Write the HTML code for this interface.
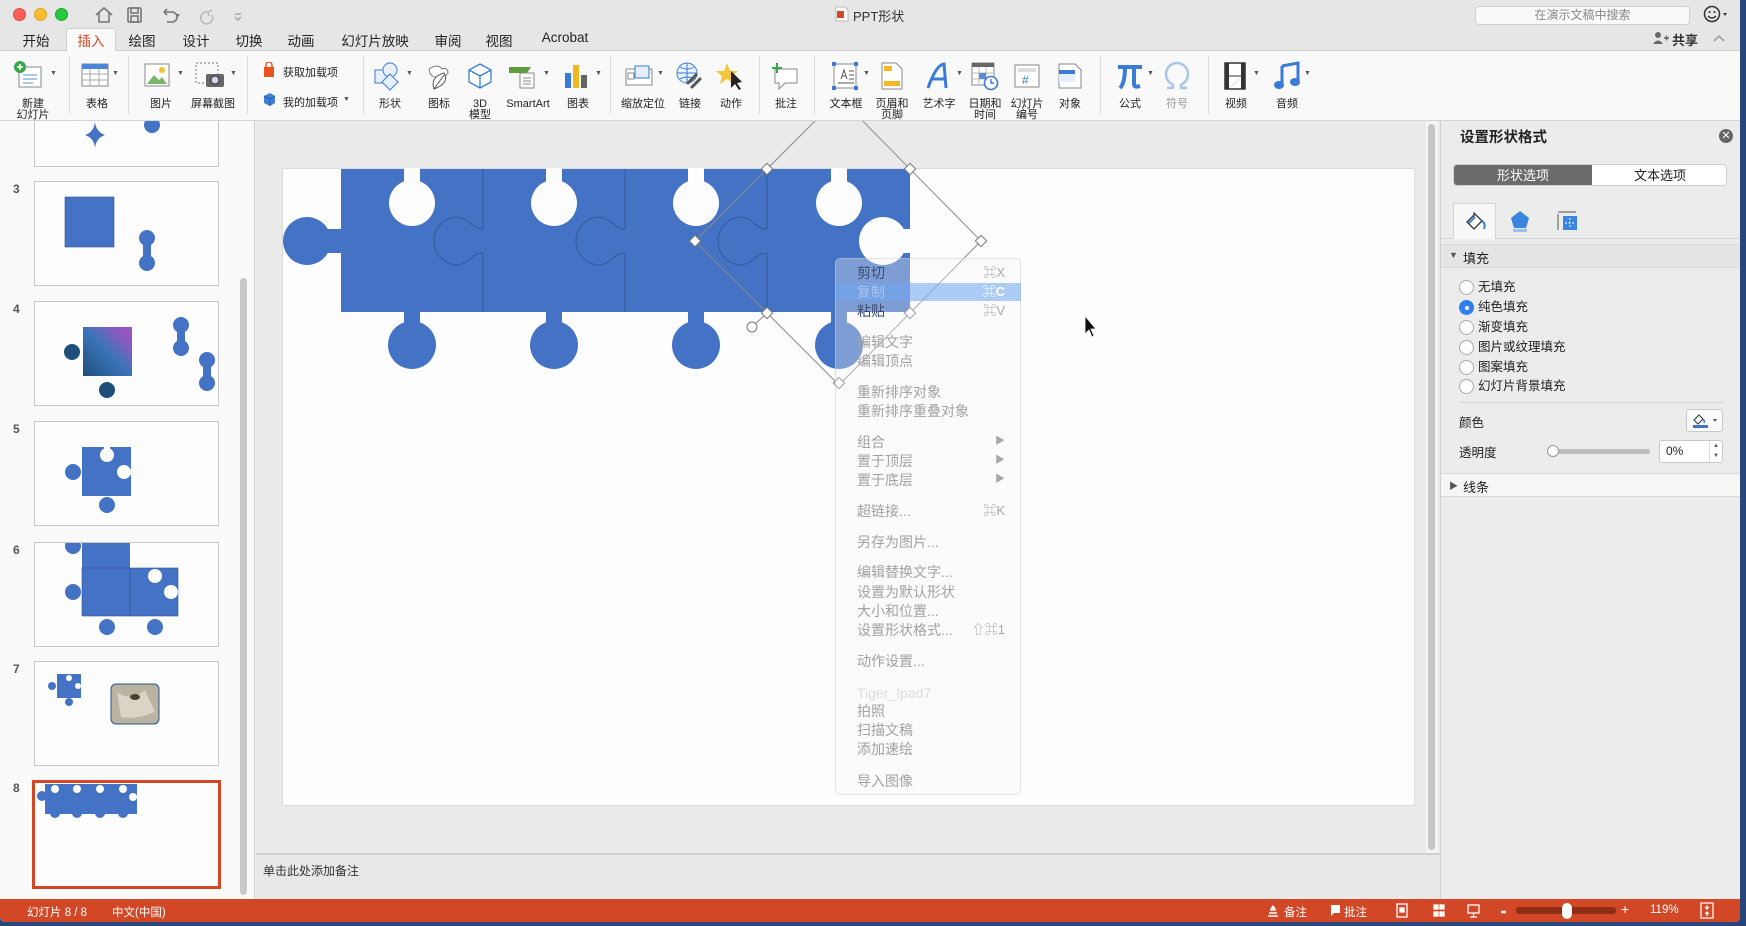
<!DOCTYPE html>
<html><head><meta charset="utf-8"><style>
*{margin:0;padding:0;box-sizing:border-box}
body{width:1746px;height:926px;background:#27467a;position:relative;overflow:hidden;font-family:"Liberation Sans","Noto Sans CJK SC",sans-serif;color:#222}
.a{position:absolute}
.win{left:0;top:0;width:1740px;height:922px;background:#f0f0f0;overflow:hidden;border-radius:0 0 5px 5px}
.tab{position:absolute;top:30px;font-size:13.5px;transform:translateX(-50%);color:#222}
.lbl{position:absolute;font-size:11px;text-align:center;transform:translateX(-50%);line-height:11px;color:#222;white-space:nowrap}
.sep{position:absolute;top:56px;width:1px;height:58px;background:#dcdcdc}
.ic{position:absolute;top:61px;transform:translateX(-50%)}
.dd{position:absolute;font-size:7px;color:#555}
.num{position:absolute;left:13px;font-size:12px;font-weight:bold;color:#555}
.th{position:absolute;left:34px;width:185px;height:105px;background:#fdfdfd;border:1px solid #c8c8c8;overflow:hidden}
.mi{position:absolute;left:857px;font-size:14px;color:#a2a2a2;line-height:16px;white-space:nowrap}
.sc{position:absolute;right:735px;font-size:13px;color:#a8a8a8;line-height:16px}
.rd{position:absolute;left:1459px;width:15px;height:15px;border-radius:50%;border:1px solid #a8a8a8;background:#fff}
.rt{position:absolute;left:1478px;font-size:12.5px;color:#222;line-height:15px}
.st{position:absolute;top:904px;font-size:11.5px;color:#fff}
</style></head><body>
<div class="a win">
<div class="a" style="left:0;top:0;width:1740px;height:51px;background:#e6e6e6;border-bottom:1px solid #d0d0d0"></div>
<div class="a" style="left:13px;top:8px;width:13px;height:13px;border-radius:50%;background:#fc5f57;border:1px solid #de4a41"></div>
<div class="a" style="left:34px;top:8px;width:13px;height:13px;border-radius:50%;background:#fdbc2e;border:1px solid #dea123"></div>
<div class="a" style="left:55px;top:8px;width:13px;height:13px;border-radius:50%;background:#28c840;border:1px solid #1daa2c"></div>
<svg class="a" style="left:94px;top:5px" width="150" height="20" viewBox="0 0 150 20" fill="none" stroke="#777" stroke-width="1.6">
<path d="M2 10 L10 3 L18 10 M5 8 V17 H15 V8"/>
<rect x="34" y="3" width="13" height="14" rx="1"/><rect x="37" y="3" width="7" height="5"/><rect x="37" y="11" width="7" height="6"/>
<path d="M70 7 H78 A5 5 0 0 1 78 17 H73 M70 7 L73 4 M70 7 L73 10"/><path d="M82 9 l2 3 l2-3" fill="#777" stroke="none"/>
<path d="M114 7 A6 6 0 1 0 118 10 M114 7 l4 -2 M114 7 l1 4" stroke="#bbb"/>
<path d="M141 9 h6 M141 12 l3 3 l3 -3" stroke="#999" stroke-width="1.2"/>
</svg>
<svg class="a" style="left:835px;top:6px" width="14" height="16"><path d="M1 1 H10 L13 4 V15 H1Z" fill="#fff" stroke="#bbb"/><rect x="2" y="5" width="7" height="7" fill="#d24726"/></svg>
<div class="a" style="left:853px;top:6px;font-size:13px;color:#333">PPT形状</div>
<div class="a" style="left:1475px;top:6px;width:215px;height:19px;background:#f9f9f9;border:1px solid #cfcfcf;border-radius:4px;font-size:12px;color:#888;text-align:center;line-height:17px">在演示文稿中搜索</div>
<svg class="a" style="left:1703px;top:5px" width="30" height="20"><circle cx="9" cy="9" r="7.5" fill="none" stroke="#333" stroke-width="1.5"/><circle cx="6.5" cy="7" r="1" fill="#333"/><circle cx="11.5" cy="7" r="1" fill="#333"/><path d="M5 11 Q9 15 13 11" fill="none" stroke="#333" stroke-width="1.3"/><path d="M20 8 l2 3 l2 -3" fill="#333"/></svg>
<div class="a" style="left:66px;top:28px;width:50px;height:24px;background:#fafafa;border:1px solid #d0d0d0;border-bottom:none;border-radius:3px 3px 0 0"></div>
<div class="tab" style="left:36px">开始</div>
<div class="tab" style="left:91px;color:#d24726">插入</div>
<div class="tab" style="left:142px">绘图</div>
<div class="tab" style="left:196px">设计</div>
<div class="tab" style="left:249px">切换</div>
<div class="tab" style="left:301px">动画</div>
<div class="tab" style="left:375px">幻灯片放映</div>
<div class="tab" style="left:448px">审阅</div>
<div class="tab" style="left:499px">视图</div>
<div class="tab" style="left:565px">Acrobat</div>
<svg class="a" style="left:1652px;top:31px" width="18" height="14"><circle cx="6" cy="4" r="3" fill="#666"/><path d="M1 13 Q6 6 11 13Z" fill="#666"/><path d="M12 7 h5 M14.5 4.5 v5" stroke="#666" stroke-width="1.5"/></svg>
<div class="a" style="left:1672px;top:30px;font-size:13px;font-weight:bold;color:#333">共享</div>
<svg class="a" style="left:1713px;top:34px" width="12" height="8"><path d="M1 7 L6 2 L11 7" fill="none" stroke="#999" stroke-width="1.5"/></svg>

<div class="a" style="left:0;top:51px;width:1740px;height:70px;background:#f9f9f9;border-bottom:1px solid #d4d4d4"></div>
<div class="sep" style="left:69px"></div><div class="sep" style="left:128px"></div><div class="sep" style="left:247px"></div><div class="sep" style="left:363px"></div><div class="sep" style="left:610px"></div><div class="sep" style="left:759px"></div><div class="sep" style="left:814px"></div><div class="sep" style="left:1100px"></div><div class="sep" style="left:1208px"></div>
<svg class="ic" style="left:28px" width="30" height="28"><rect x="6" y="6" width="22" height="20" fill="#fff" stroke="#888"/><path d="M10 14h14M10 18h14M10 22h10" stroke="#5b8dd6"/><circle cx="7" cy="6" r="6" fill="#3aa64a"/><path d="M7 3v6M4 6h6" stroke="#fff" stroke-width="1.6"/></svg>
<svg class="ic" style="left:95px" width="30" height="28"><rect x="2" y="3" width="26" height="22" fill="#fff" stroke="#888"/><rect x="2" y="3" width="26" height="5" fill="#4a86d8"/><path d="M2 13h26M2 19h26M10 8v17M19 8v17" stroke="#aaa"/></svg>
<svg class="ic" style="left:158px" width="30" height="28"><rect x="2" y="3" width="24" height="22" fill="#fff" stroke="#888"/><path d="M4 23 L11 14 L16 19 L19 16 L24 23Z" fill="#7bb66a"/><circle cx="19" cy="9" r="3" fill="#f2c12e"/></svg>
<svg class="ic" style="left:211px" width="34" height="28"><rect x="2" y="2" width="22" height="20" fill="none" stroke="#777" stroke-dasharray="2 2"/><rect x="12" y="13" width="18" height="13" rx="2" fill="#666"/><circle cx="21" cy="19" r="4" fill="#cfd8e6" stroke="#333"/></svg>
<svg class="a" style="left:262px;top:62px" width="14" height="16"><path d="M2 5h10v10H2z" fill="#e8521f"/><path d="M4 5 V3 A3 3 0 0 1 10 3 V5" fill="none" stroke="#e8521f" stroke-width="1.5"/></svg>
<div class="a" style="left:283px;top:64px;font-size:11px">获取加载项</div>
<svg class="a" style="left:261px;top:91px" width="16" height="16"><path d="M3 5 L9 2 L14 5 V12 L9 15 L3 12Z" fill="#3f7fd6"/><path d="M3 5 L9 8 L14 5 M9 8 V15" stroke="#2a62b0" fill="none"/></svg>
<div class="a" style="left:283px;top:94px;font-size:11px">我的加载项</div><div class="dd" style="left:343px;top:96px">▼</div>
<svg class="ic" style="left:388px" width="30" height="30"><rect x="2" y="9" width="13" height="13" fill="#e8f0fb" stroke="#3a7bd5"/><circle cx="17" cy="9" r="7" fill="#e8f0fb" stroke="#3a7bd5"/><path d="M17 13 L25 21 L17 29 L9 21Z" fill="#e8f0fb" stroke="#3a7bd5"/></svg>
<svg class="ic" style="left:439px" width="30" height="30"><path d="M5 8 Q14 2 18 8 Q24 6 24 12 Q20 18 12 16 Q6 16 5 8Z" fill="#fff" stroke="#777"/><path d="M10 28 Q6 16 20 12 Q26 22 10 28Z" fill="#fff" stroke="#555"/><path d="M10 28 L20 14" stroke="#555"/></svg>
<svg class="ic" style="left:480px" width="30" height="30"><path d="M15 3 L26 9 V21 L15 27 L4 21 V9Z M4 9 L15 15 L26 9 M15 15 V27" fill="#fff" stroke="#3a7bd5" stroke-width="1.3"/></svg>
<svg class="ic" style="left:524px" width="34" height="30"><path d="M2 6 H24 L20 12 H2Z" fill="#5c9e3c"/><rect x="13" y="12" width="14" height="15" fill="#fff" stroke="#888"/><path d="M16 17h8M16 20h8M16 23h8" stroke="#888"/></svg>
<svg class="ic" style="left:576px" width="30" height="30"><rect x="4" y="12" width="6" height="15" fill="#3a7bd5"/><rect x="12" y="4" width="6" height="23" fill="#f2b824"/><rect x="20" y="14" width="6" height="13" fill="#666"/></svg>
<svg class="ic" style="left:640px" width="34" height="30"><rect x="3" y="8" width="26" height="16" fill="#fff" stroke="#888"/><rect x="12" y="5" width="14" height="12" fill="#e5eefb" stroke="#3a7bd5"/><rect x="5" y="12" width="6" height="6" fill="#fff" stroke="#888"/></svg>
<svg class="ic" style="left:689px" width="30" height="30"><circle cx="13" cy="12" r="10" fill="#eaf2fc" stroke="#3a7bd5"/><path d="M3 12h20M13 2v20M6 6 Q13 10 20 6M6 18 Q13 14 20 18" stroke="#3a7bd5" fill="none"/><path d="M14 22 L22 14 M18 26 L26 18" stroke="#555" stroke-width="3" stroke-linecap="round"/></svg>
<svg class="ic" style="left:730px" width="30" height="30"><path d="M12 2 L15 10 L23 10 L17 15 L19 23 L12 18 L5 23 L7 15 L1 10 L9 10Z" fill="#f5c53b"/><path d="M16 10 L16 27 L20 23 L24 29 L26 28 L22 22 L27 21Z" fill="#222"/></svg>
<svg class="ic" style="left:786px" width="30" height="30"><path d="M4 8 H26 V22 H14 L8 28 V22 H4Z" fill="#fff" stroke="#888"/><path d="M6 2v10M1 7h10" stroke="#3aa64a" stroke-width="2"/></svg>
<svg class="ic" style="left:846px" width="30" height="30"><rect x="3" y="3" width="22" height="24" fill="#fff" stroke="#888"/><path d="M10 18 L13 9 L16 18 M11 15h4M18 10h5M18 14h5M18 18h5M7 22h16" stroke="#555" fill="none"/><rect x="1" y="1" width="4" height="4" fill="#3a7bd5"/><rect x="23" y="1" width="4" height="4" fill="#3a7bd5"/><rect x="1" y="25" width="4" height="4" fill="#3a7bd5"/><rect x="23" y="25" width="4" height="4" fill="#3a7bd5"/></svg>
<svg class="ic" style="left:892px" width="30" height="30"><path d="M5 2 H19 L25 8 V28 H5Z" fill="#fff" stroke="#888"/><rect x="7" y="5" width="8" height="5" fill="#f2b824"/><rect x="7" y="20" width="16" height="5" fill="#f2b824"/></svg>
<svg class="ic" style="left:939px" width="30" height="30"><path d="M4 27 Q12 4 20 3 L22 27 M8 18 H22" stroke="#3a7bd5" stroke-width="3" fill="none"/></svg>
<svg class="ic" style="left:985px" width="30" height="30"><rect x="2" y="2" width="22" height="22" fill="#fff" stroke="#888"/><rect x="2" y="2" width="22" height="4" fill="#666"/><path d="M2 12h22M2 18h22M9 6v18M16 6v18" stroke="#bbb"/><rect x="9" y="12" width="7" height="6" fill="#5b8dd6"/><circle cx="21" cy="22" r="6.5" fill="#fff" stroke="#3a7bd5" stroke-width="1.6"/><path d="M21 18v4h3" stroke="#3a7bd5" stroke-width="1.4" fill="none"/></svg>
<svg class="ic" style="left:1027px" width="30" height="30"><rect x="3" y="4" width="24" height="22" fill="#fff" stroke="#888"/><path d="M6 8h18M6 10h18" stroke="#bbb"/><text x="10" y="23" font-size="12" fill="#3a7bd5" font-family="Liberation Sans">#</text></svg>
<svg class="ic" style="left:1070px" width="30" height="30"><path d="M4 3 H20 L26 9 V27 H4Z" fill="#fff" stroke="#888"/><rect x="4" y="9" width="16" height="4" fill="#3a7bd5"/><rect x="4" y="13" width="16" height="8" fill="#e5eefb"/></svg>
<svg class="ic" style="left:1130px" width="30" height="30"><path d="M3 6 H27 M10 6 Q10 22 5 27 M19 6 V23 Q19 27 25 25" stroke="#3a7bd5" stroke-width="4" fill="none"/></svg>
<svg class="ic" style="left:1177px" width="30" height="30"><path d="M5 27 H11 V24 Q4 20 4 13 A11 11 0 0 1 26 13 Q26 20 19 24 V27 H25" stroke="#a9c6ea" stroke-width="2.5" fill="none"/></svg>
<svg class="ic" style="left:1236px" width="30" height="30"><rect x="4" y="2" width="20" height="26" fill="#fff" stroke="#333" stroke-width="1.5"/><path d="M4 2h4v26H4zM20 2h4v26h-4z" fill="#333"/><path d="M8 15h12" stroke="#333"/><path d="M9 26 L19 18" stroke="#ddd"/></svg>
<svg class="ic" style="left:1287px" width="30" height="30"><path d="M10 5 L26 2 V21" stroke="#3a7bd5" stroke-width="3" fill="none"/><path d="M10 5 V24" stroke="#3a7bd5" stroke-width="3"/><ellipse cx="7" cy="24" rx="5" ry="4" fill="#3a7bd5"/><ellipse cx="23" cy="21" rx="5" ry="4" fill="#3a7bd5"/></svg>
<div class="dd" style="left:50px;top:70px">▼</div><div class="dd" style="left:112px;top:70px">▼</div><div class="dd" style="left:177px;top:70px">▼</div><div class="dd" style="left:230px;top:70px">▼</div><div class="dd" style="left:406px;top:70px">▼</div><div class="dd" style="left:543px;top:70px">▼</div><div class="dd" style="left:595px;top:70px">▼</div><div class="dd" style="left:657px;top:70px">▼</div><div class="dd" style="left:863px;top:70px">▼</div><div class="dd" style="left:956px;top:70px">▼</div><div class="dd" style="left:1147px;top:70px">▼</div><div class="dd" style="left:1253px;top:70px">▼</div><div class="dd" style="left:1304px;top:70px">▼</div>
<div class="lbl" style="left:33px;top:99px">新建<br>幻灯片</div>
<div class="lbl" style="left:97px;top:99px">表格</div>
<div class="lbl" style="left:161px;top:99px">图片</div>
<div class="lbl" style="left:213px;top:99px">屏幕截图</div>
<div class="lbl" style="left:390px;top:99px">形状</div>
<div class="lbl" style="left:439px;top:99px">图标</div>
<div class="lbl" style="left:480px;top:99px">3D<br>模型</div>
<div class="lbl" style="left:528px;top:99px">SmartArt</div>
<div class="lbl" style="left:578px;top:99px">图表</div>
<div class="lbl" style="left:643px;top:99px">缩放定位</div>
<div class="lbl" style="left:690px;top:99px">链接</div>
<div class="lbl" style="left:731px;top:99px">动作</div>
<div class="lbl" style="left:786px;top:99px">批注</div>
<div class="lbl" style="left:846px;top:99px">文本框</div>
<div class="lbl" style="left:892px;top:99px">页眉和<br>页脚</div>
<div class="lbl" style="left:939px;top:99px">艺术字</div>
<div class="lbl" style="left:985px;top:99px">日期和<br>时间</div>
<div class="lbl" style="left:1027px;top:99px">幻灯片<br>编号</div>
<div class="lbl" style="left:1070px;top:99px">对象</div>
<div class="lbl" style="left:1130px;top:99px">公式</div>
<div class="lbl" style="left:1177px;top:99px;color:#999">符号</div>
<div class="lbl" style="left:1236px;top:99px">视频</div>
<div class="lbl" style="left:1287px;top:99px">音频</div>

<div class="a" style="left:0;top:121px;width:255px;height:778px;background:#fafafa;border-right:1px solid #d0d0d0"></div>
<div class="a" style="left:240px;top:278px;width:7px;height:617px;border-radius:4px;background:#c8c8c8"></div>
<div class="th" style="top:121px;height:46px;border-top:none"><svg width="185" height="46"><path d="M60 1 Q61 11 70 14 Q61 17 60 27 Q59 17 50 14 Q59 11 60 1Z" fill="#4472c4"/><circle cx="117" cy="4" r="8" fill="#4472c4"/></svg></div>
<div class="num" style="top:182px">3</div>
<div class="th" style="top:181px"><svg width="185" height="105"><rect x="30" y="15" width="49" height="50" fill="#4472c4" stroke="#2f528f" stroke-width=".6"/><circle cx="112" cy="56" r="8" fill="#4472c4"/><circle cx="112" cy="81" r="8" fill="#4472c4"/><rect x="108" y="56" width="8" height="25" fill="#4472c4"/></svg></div>
<div class="num" style="top:302px">4</div>
<div class="th" style="top:301px"><svg width="185" height="105"><defs><linearGradient id="g" x1="0" y1="1" x2="1" y2="0"><stop offset="0" stop-color="#1f4e79"/><stop offset=".5" stop-color="#3a75b8"/><stop offset=".8" stop-color="#8b5bbf"/><stop offset="1" stop-color="#9b55c4"/></linearGradient></defs><rect x="48" y="25" width="49" height="49" fill="url(#g)"/><circle cx="37" cy="50" r="8" fill="#1f4e79"/><circle cx="72" cy="88" r="8" fill="#1f4e79"/><circle cx="146" cy="23" r="8" fill="#4472c4"/><circle cx="146" cy="46" r="8" fill="#4472c4"/><rect x="142" y="23" width="8" height="23" fill="#4472c4"/><circle cx="172" cy="58" r="8" fill="#4472c4"/><circle cx="172" cy="81" r="8" fill="#4472c4"/><rect x="168" y="58" width="8" height="23" fill="#4472c4"/></svg></div>
<div class="num" style="top:422px">5</div>
<div class="th" style="top:421px"><svg width="185" height="105"><rect x="47" y="25" width="49" height="49" fill="#4472c4"/><circle cx="38" cy="50" r="8" fill="#4472c4"/><circle cx="72" cy="83" r="8" fill="#4472c4"/><circle cx="72" cy="33" r="7" fill="#fdfdfd"/><rect x="69" y="24" width="6" height="8" fill="#fdfdfd"/><circle cx="89" cy="50" r="7" fill="#fdfdfd"/><rect x="89" y="47" width="8" height="6" fill="#fdfdfd"/></svg></div>
<div class="num" style="top:543px">6</div>
<div class="th" style="top:542px"><svg width="185" height="105"><rect x="47" y="0" width="48" height="25" fill="#4472c4"/><circle cx="38" cy="3" r="8" fill="#4472c4"/><rect x="47" y="25" width="96" height="48" fill="#4472c4" stroke="#2f528f" stroke-width=".6"/><circle cx="38" cy="49" r="8" fill="#4472c4"/><circle cx="72" cy="84" r="8" fill="#4472c4"/><circle cx="120" cy="84" r="8" fill="#4472c4"/><circle cx="120" cy="33" r="7" fill="#fdfdfd"/><circle cx="136" cy="49" r="7" fill="#fdfdfd"/><path d="M95 25 V73" stroke="#2f528f" stroke-width=".6"/></svg></div>
<div class="num" style="top:662px">7</div>
<div class="th" style="top:661px"><svg width="185" height="105"><rect x="22" y="12" width="24" height="24" fill="#4472c4"/><circle cx="17" cy="24" r="4" fill="#4472c4"/><circle cx="34" cy="40" r="4" fill="#4472c4"/><circle cx="34" cy="16" r="3" fill="#fdfdfd"/><circle cx="43" cy="24" r="3" fill="#fdfdfd"/><rect x="76" y="22" width="48" height="40" rx="5" fill="#b9b3a2" stroke="#2f528f"/><path d="M82 30 Q95 40 110 28 L120 50 Q100 58 86 55Z" fill="#d9d4c6"/><ellipse cx="100" cy="35" rx="5" ry="3" fill="#4a4030"/></svg></div>
<div class="num" style="top:781px">8</div>
<div class="a" style="left:32px;top:780px;width:189px;height:109px;border:3px solid #d24726;background:#fdfdfd"><svg width="183" height="103" style="position:absolute;left:0;top:0"><rect x="10" y="1" width="92" height="30" fill="#4472c4"/><circle cx="7" cy="13" r="5" fill="#4472c4"/><circle cx="20" cy="30" r="5" fill="#4472c4"/><circle cx="42" cy="30" r="5" fill="#4472c4"/><circle cx="65" cy="30" r="5" fill="#4472c4"/><circle cx="88" cy="30" r="5" fill="#4472c4"/><circle cx="20" cy="6" r="4" fill="#fdfdfd"/><circle cx="42" cy="6" r="4" fill="#fdfdfd"/><circle cx="65" cy="6" r="4" fill="#fdfdfd"/><circle cx="88" cy="6" r="4" fill="#fdfdfd"/><circle cx="98" cy="14" r="4" fill="#fdfdfd"/></svg></div>

<div class="a" style="left:256px;top:121px;width:1184px;height:732px;background:#eaeaea"></div>
<div class="a" style="left:1426px;top:121px;width:12px;height:732px;background:#f4f4f4"></div>
<div class="a" style="left:1428px;top:124px;width:7px;height:726px;border-radius:4px;background:#c6c6c6"></div>
<div class="a" style="left:282px;top:168px;width:1133px;height:638px;background:#fdfdfd;border:1px solid #dcdcdc"></div>
<svg class="a" style="left:0;top:0" width="1440" height="853" viewBox="0 0 1440 853">
<defs><clipPath id="c"><rect x="256" y="121" width="1170" height="732"/></clipPath></defs>
<g clip-path="url(#c)">
<g fill="#4472c4">
<rect x="341" y="169" width="569" height="143"/>
<circle cx="307" cy="241" r="24"/><rect x="318" y="229" width="24" height="24"/>
<circle cx="412" cy="345" r="24"/><rect x="404" y="310" width="16" height="18"/>
<circle cx="554" cy="345" r="24"/><rect x="546" y="310" width="16" height="18"/>
<circle cx="696" cy="345" r="24"/><rect x="688" y="310" width="16" height="18"/>
<circle cx="839" cy="345" r="24"/><rect x="831" y="310" width="16" height="18"/>
</g>
<g fill="#fdfdfd">
<circle cx="412" cy="203" r="23"/><rect x="404" y="168" width="16" height="18"/>
<circle cx="554" cy="203" r="23"/><rect x="546" y="168" width="16" height="18"/>
<circle cx="696" cy="203" r="23"/><rect x="688" y="168" width="16" height="18"/>
<circle cx="839" cy="203" r="23"/><rect x="831" y="168" width="16" height="18"/>
<circle cx="883" cy="241" r="24"/><rect x="890" y="229" width="22" height="24"/>
</g>
<g fill="none" stroke="#2f528f" stroke-width="1" opacity=".8">
<path d="M483 169 V229 C472 229 470 219 458 217 A24 24 0 1 0 458 265 C470 263 472 253 483 253 V312"/>
<path d="M625 169 V229 C614 229 612 219 600 217 A24 24 0 1 0 600 265 C612 263 614 253 625 253 V312"/>
<path d="M767 169 V229 C756 229 754 219 742 217 A24 24 0 1 0 742 265 C754 263 756 253 767 253 V312"/>
</g>
<g fill="none" stroke="#8a8a8a" stroke-width="1">
<path d="M695 241 L839 97 L981 241 L839 385 Z"/>
<path d="M752 327 L767 313"/>
</g>
<g fill="#fff" stroke="#777" stroke-width="1">
<rect x="-4" y="-4" width="8" height="8" transform="translate(767 169) rotate(45)"/>
<rect x="-4" y="-4" width="8" height="8" transform="translate(910 169) rotate(45)"/>
<rect x="-4" y="-4" width="8" height="8" transform="translate(695 241) rotate(45)"/>
<rect x="-4" y="-4" width="8" height="8" transform="translate(981 241) rotate(45)"/>
<rect x="-4" y="-4" width="8" height="8" transform="translate(767 313) rotate(45)"/>
<rect x="-4" y="-4" width="8" height="8" transform="translate(910 313) rotate(45)"/>
<rect x="-4" y="-4" width="8" height="8" transform="translate(839 383) rotate(45)"/>
<circle cx="752" cy="327" r="5"/>
</g>
</g>
<path d="M1085 316 V334 L1089 330 L1092 337 L1094 336 L1091 329 L1096 329Z" fill="#111" stroke="#fff" stroke-width=".8"/>
</svg>
<div class="a" style="left:835px;top:258px;width:186px;height:537px;background:rgba(250,250,250,0.32);border:1px solid rgba(200,200,200,0.5);border-radius:5px"></div>
<div class="a" style="left:836px;top:283px;width:185px;height:18px;background:rgba(110,165,240,0.55)"></div>
<div class="mi" style="top:265px;color:#3a4c70">剪切</div><div class="sc" style="top:265px">⌘X</div>
<div class="mi" style="top:284px;color:#a9c4ee">复制</div><div class="sc" style="top:284px;color:#fff;font-weight:bold">⌘C</div>
<div class="mi" style="top:303px;color:#3a4c70">粘贴</div><div class="sc" style="top:303px">⌘V</div>
<div class="mi" style="top:334px">编辑文字</div>
<div class="mi" style="top:353px">编辑顶点</div>
<div class="mi" style="top:384px">重新排序对象</div>
<div class="mi" style="top:403px">重新排序重叠对象</div>
<div class="mi" style="top:434px">组合</div><div class="sc" style="top:434px;font-size:10px">▶</div>
<div class="mi" style="top:453px">置于顶层</div><div class="sc" style="top:453px;font-size:10px">▶</div>
<div class="mi" style="top:472px">置于底层</div><div class="sc" style="top:472px;font-size:10px">▶</div>
<div class="mi" style="top:503px">超链接...</div><div class="sc" style="top:503px">⌘K</div>
<div class="mi" style="top:534px">另存为图片...</div>
<div class="mi" style="top:564px">编辑替换文字...</div>
<div class="mi" style="top:584px">设置为默认形状</div>
<div class="mi" style="top:603px">大小和位置...</div>
<div class="mi" style="top:622px">设置形状格式...</div><div class="sc" style="top:622px">⇧⌘1</div>
<div class="mi" style="top:653px">动作设置...</div>
<div class="mi" style="top:685px;color:#dcdcdc">Tiger_Ipad7</div>
<div class="mi" style="top:703px">拍照</div>
<div class="mi" style="top:722px">扫描文稿</div>
<div class="mi" style="top:741px">添加速绘</div>
<div class="mi" style="top:773px">导入图像</div>

<div class="a" style="left:256px;top:853px;width:1184px;height:46px;background:#e8e8e8;border-top:2px solid #d0d0d0"></div>
<div class="a" style="left:263px;top:862px;font-size:12px;color:#333">单击此处添加备注</div>

<div class="a" style="left:1440px;top:121px;width:300px;height:778px;background:#ececec;border-left:1px solid #d0d0d0"></div>
<div class="a" style="left:1460px;top:126px;font-size:14.5px;font-weight:bold;color:#222">设置形状格式</div>
<div class="a" style="left:1719px;top:129px;width:14px;height:14px;border-radius:50%;background:#666;color:#fff;font-size:11px;line-height:14px;text-align:center">✕</div>
<div class="a" style="left:1453px;top:164px;width:274px;height:22px;border:1px solid #cfcfcf;border-radius:4px;background:#fff;overflow:hidden">
<div class="a" style="left:0;top:0;width:138px;height:22px;background:#6b6b6b;color:#fff;font-size:13px;text-align:center;line-height:21px">形状选项</div>
<div class="a" style="left:138px;top:0;width:136px;height:22px;color:#222;font-size:13px;text-align:center;line-height:21px">文本选项</div></div>
<div class="a" style="left:1441px;top:238px;width:299px;height:1px;background:#d4d4d4"></div>
<div class="a" style="left:1453px;top:203px;width:43px;height:36px;background:#f8f8f8;border:1px solid #d4d4d4;border-bottom:none"></div>
<svg class="a" style="left:1463px;top:208px" width="24" height="24"><path d="M4 14 L12 6 L19 13 L11 21Z" fill="#fff" stroke="#333" stroke-width="1.3"/><path d="M11 4 V11" stroke="#333"/><path d="M19 13 Q23 16 21 21" stroke="#3a7bd5" stroke-width="2" fill="none"/><path d="M6 15 L12 9" stroke="#3a7bd5" stroke-width="2"/></svg>
<svg class="a" style="left:1508px;top:209px" width="24" height="24"><path d="M12 2 L21 9 L18 19 H6 L3 9Z" fill="#3a85e0"/><rect x="5" y="20" width="14" height="3" fill="#9cc0ee"/></svg>
<svg class="a" style="left:1555px;top:210px" width="24" height="24"><path d="M3 2 h18 M3 4 V20" stroke="#555"/><rect x="8" y="6" width="14" height="14" fill="#3a85e0"/><path d="M15 8v10M10 13h10" stroke="#fff" stroke-dasharray="2 1.5"/></svg>
<div class="a" style="left:1441px;top:244px;width:299px;height:24px;background:#e4e4e4;border-top:1px solid #d8d8d8;border-bottom:1px solid #d8d8d8"></div>
<div class="a" style="left:1449px;top:250px;font-size:9px;color:#555">▼</div>
<div class="a" style="left:1463px;top:248px;font-size:13px;color:#222">填充</div>
<div class="rd" style="top:280px"></div><div class="rt" style="top:280px">无填充</div>
<div class="rd" style="top:300px;background:#2f7ff0;border-color:#2f7ff0"><div style="position:absolute;left:4.5px;top:4.5px;width:4px;height:4px;border-radius:50%;background:#fff"></div></div><div class="rt" style="top:300px">纯色填充</div>
<div class="rd" style="top:320px"></div><div class="rt" style="top:320px">渐变填充</div>
<div class="rd" style="top:340px"></div><div class="rt" style="top:340px">图片或纹理填充</div>
<div class="rd" style="top:360px"></div><div class="rt" style="top:360px">图案填充</div>
<div class="rd" style="top:379px"></div><div class="rt" style="top:379px">幻灯片背景填充</div>
<div class="a" style="left:1459px;top:402px;width:265px;height:1px;background:#d6d6d6"></div>
<div class="a" style="left:1459px;top:412px;font-size:12.5px">颜色</div>
<div class="a" style="left:1686px;top:409px;width:37px;height:23px;background:#fafafa;border:1px solid #c8c8c8;border-radius:3px"><svg width="35" height="21"><path d="M7 10 L12 5 L16 9 L11 14Z" fill="#fff" stroke="#333"/><path d="M16 9 Q18 11 17 13" stroke="#3a7bd5" stroke-width="1.5" fill="none"/><rect x="6" y="15" width="15" height="3" fill="#4472c4"/><path d="M26 9 l2 3 l2-3" fill="#555"/></svg></div>
<div class="a" style="left:1459px;top:442px;font-size:12.5px">透明度</div>
<div class="a" style="left:1550px;top:449px;width:100px;height:5px;border-radius:3px;background:#bdbdbd"></div>
<div class="a" style="left:1547px;top:445px;width:12px;height:12px;border-radius:50%;background:#fff;border:1px solid #999"></div>
<div class="a" style="left:1659px;top:440px;width:64px;height:23px;background:#fff;border:1px solid #c8c8c8;border-radius:3px;font-size:12px;line-height:21px;padding-left:6px">0%<span style="position:absolute;right:0;top:0;width:13px;height:21px;border-left:1px solid #ddd;font-size:6px;line-height:10px;text-align:center;color:#555">▲<br>▼</span></div>
<div class="a" style="left:1441px;top:473px;width:299px;height:24px;background:#f6f6f6;border-top:1px solid #d8d8d8;border-bottom:1px solid #d8d8d8"></div>
<div class="a" style="left:1449px;top:479px;font-size:9px;color:#555">▶</div>
<div class="a" style="left:1463px;top:477px;font-size:13px;color:#222">线条</div>

<div class="a" style="left:0;top:899px;width:1740px;height:23px;background:#d24726"></div>
<div class="st" style="left:27px">幻灯片 8 / 8</div>
<div class="st" style="left:112px">中文(中国)</div>
<svg class="a" style="left:1266px;top:904px" width="14" height="14"><path d="M2 12h10M3 9h8M4 6h6" stroke="#fff" stroke-width="1.5"/><path d="M7 1 L10 5 H4Z" fill="#fff"/></svg>
<div class="st" style="left:1284px">备注</div>
<svg class="a" style="left:1330px;top:904px" width="12" height="14"><path d="M1 1h9v8H4L1 12Z" fill="#fff"/></svg>
<div class="st" style="left:1344px">批注</div>
<svg class="a" style="left:1395px;top:903px" width="120" height="16" fill="none" stroke="#fff" stroke-width="1.3"><rect x="2" y="1" width="10" height="13"/><rect x="5" y="5" width="4" height="4" fill="#fff"/><rect x="39" y="2" width="4" height="4" fill="#fff"/><rect x="45" y="2" width="4" height="4" fill="#fff"/><rect x="39" y="9" width="4" height="4" fill="#fff"/><rect x="45" y="9" width="4" height="4" fill="#fff"/><rect x="73" y="2" width="11" height="8"/><path d="M78.5 10v4M75 14h7"/><path d="M106 9h5" stroke-width="2.5"/></svg>
<div class="a" style="left:1516px;top:907px;width:100px;height:7px;background:#8f2d16;border-radius:3px"></div>
<div class="a" style="left:1562px;top:903px;width:10px;height:16px;border-radius:5px;background:#fff"></div>
<div class="st" style="left:1621px;font-size:14px;top:901px">+</div>
<div class="st" style="left:1650px">119%</div>
<svg class="a" style="left:1700px;top:902px" width="14" height="18" fill="none" stroke="#fff" stroke-width="1.2"><rect x="1" y="1" width="12" height="15"/><path d="M7 3v4M5 5l2 2 2-2M7 14v-4M5 12l2-2 2 2"/></svg>
</div>
</body></html>
